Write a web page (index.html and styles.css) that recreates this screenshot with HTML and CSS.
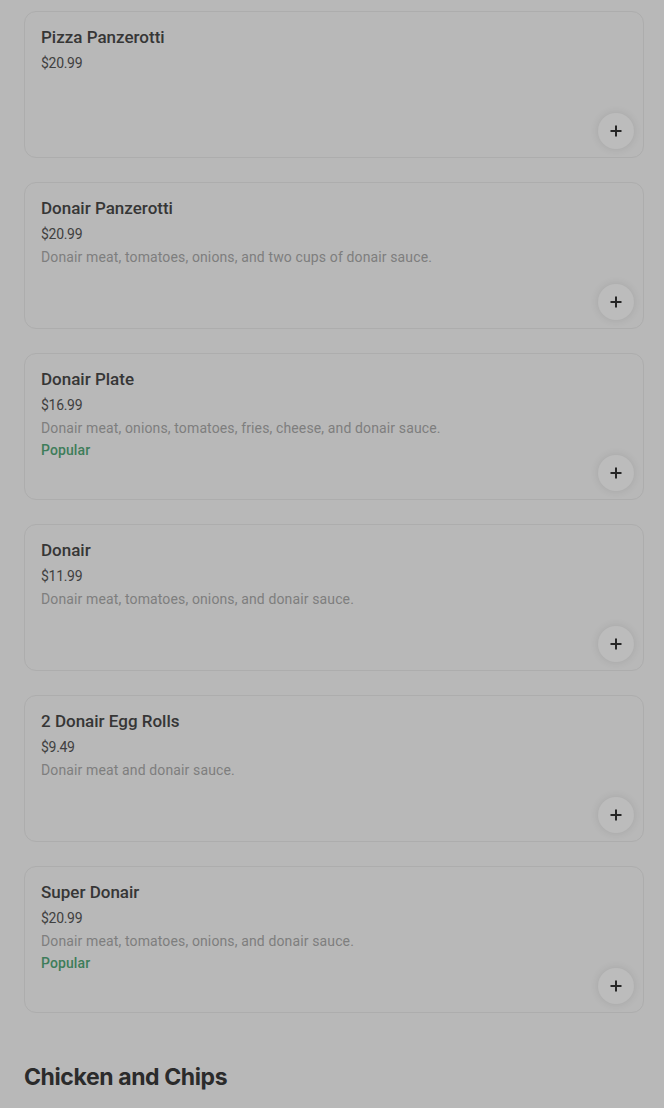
FILE: index.html
```html
<!DOCTYPE html>
<html>
<head>
<meta charset="utf-8">
<link rel="stylesheet" href="styles.css">
</head>
<body>
<main class="menu">
  <ul class="items">
    <li class="card">
      <div class="name">Pizza Panzerotti</div>
      <div class="price">$20.99</div>
      <button class="add" aria-label="Add"><svg viewBox="0 0 12 12" width="12" height="12"><path d="M6 0.5v11M0.5 6h11" stroke="currentColor" stroke-width="2"/></svg></button>
    </li>
    <li class="card">
      <div class="name">Donair Panzerotti</div>
      <div class="price">$20.99</div>
      <div class="desc">Donair meat, tomatoes, onions, and two cups of donair sauce.</div>
      <button class="add" aria-label="Add"><svg viewBox="0 0 12 12" width="12" height="12"><path d="M6 0.5v11M0.5 6h11" stroke="currentColor" stroke-width="2"/></svg></button>
    </li>
    <li class="card">
      <div class="name">Donair Plate</div>
      <div class="price">$16.99</div>
      <div class="desc">Donair meat, onions, tomatoes, fries, cheese, and donair sauce.</div>
      <div class="tag">Popular</div>
      <button class="add" aria-label="Add"><svg viewBox="0 0 12 12" width="12" height="12"><path d="M6 0.5v11M0.5 6h11" stroke="currentColor" stroke-width="2"/></svg></button>
    </li>
    <li class="card">
      <div class="name">Donair</div>
      <div class="price">$11.99</div>
      <div class="desc">Donair meat, tomatoes, onions, and donair sauce.</div>
      <button class="add" aria-label="Add"><svg viewBox="0 0 12 12" width="12" height="12"><path d="M6 0.5v11M0.5 6h11" stroke="currentColor" stroke-width="2"/></svg></button>
    </li>
    <li class="card">
      <div class="name">2 Donair Egg Rolls</div>
      <div class="price">$9.49</div>
      <div class="desc">Donair meat and donair sauce.</div>
      <button class="add" aria-label="Add"><svg viewBox="0 0 12 12" width="12" height="12"><path d="M6 0.5v11M0.5 6h11" stroke="currentColor" stroke-width="2"/></svg></button>
    </li>
    <li class="card">
      <div class="name">Super Donair</div>
      <div class="price">$20.99</div>
      <div class="desc">Donair meat, tomatoes, onions, and donair sauce.</div>
      <div class="tag">Popular</div>
      <button class="add" aria-label="Add"><svg viewBox="0 0 12 12" width="12" height="12"><path d="M6 0.5v11M0.5 6h11" stroke="currentColor" stroke-width="2"/></svg></button>
    </li>
  </ul>
  <h2 class="section">Chicken and Chips</h2>
</main>
</body>
</html>
```
FILE: styles.css
```css
html, body {
  margin: 0;
  padding: 0;
  background: #b8b8b8;
}
body {
  font-family: Roboto, "Liberation Sans", sans-serif;
  color: #2e2e2e;
}
.menu {
  padding: 11px 20px 0 24px;
}
.items {
  list-style: none;
  margin: 0;
  padding: 0;
  display: flex;
  flex-direction: column;
  gap: 24px;
}
.card {
  position: relative;
  box-sizing: border-box;
  height: 147px;
  border: 1px solid #adadad;
  border-radius: 12px;
  padding: 14px 16px 16px;
  display: flex;
  flex-direction: column;
}
.name {
  font-size: 17px;
  font-weight: 500;
  line-height: 22px;
  color: #363636;
  margin-bottom: 5px;
}
.price {
  font-size: 14px;
  line-height: 20px;
  letter-spacing: -0.3px;
  color: #404040;
  margin-bottom: 3px;
}
.desc {
  font-size: 14px;
  line-height: 20px;
  letter-spacing: 0.13px;
  color: #7e7e7e;
  margin-bottom: 2px;
}
.tag {
  font-size: 14px;
  line-height: 20px;
  font-weight: 500;
  letter-spacing: 0.1px;
  color: #3e7d5a;
}
.add {
  position: absolute;
  right: 9px;
  bottom: 8px;
  width: 36px;
  height: 36px;
  border: none;
  border-radius: 50%;
  background: #bcbcbc;
  box-shadow: 0 0 8px rgba(0, 0, 0, 0.1);
  color: #262626;
  display: flex;
  align-items: center;
  justify-content: center;
  padding: 0;
}
.section {
  margin: 50px 0 0;
  font-family: Inter, "Liberation Sans", sans-serif;
  font-size: 23px;
  font-weight: 700;
  letter-spacing: -0.4px;
  color: #2b2b2b;
}
```
